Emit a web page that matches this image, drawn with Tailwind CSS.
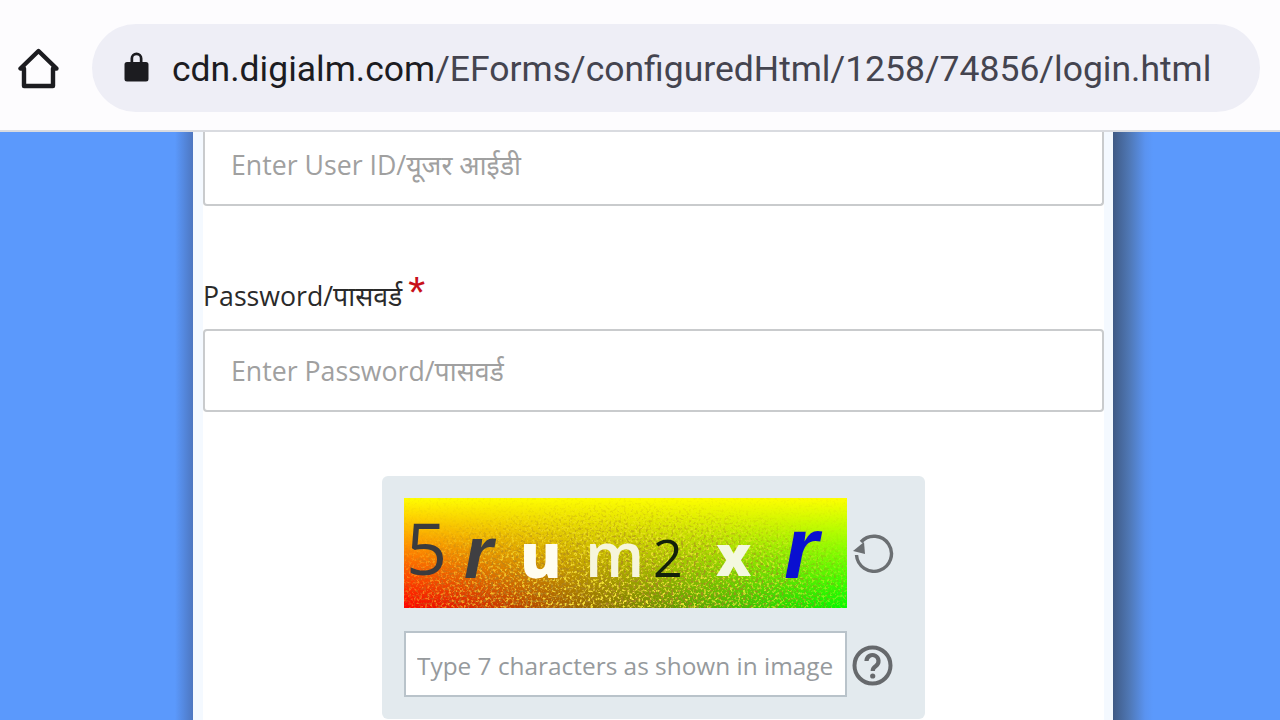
<!DOCTYPE html>
<html lang="hi">
<head>
  <meta charset="UTF-8" />
  <title>login</title>
  <script src="https://cdn.jsdelivr.net/npm/@tailwindcss/browser@4"></script>
</head>
<body class="h-screen overflow-hidden flex flex-col bg-[#5b99fc] font-['Open_Sans','Noto_Sans',sans-serif]">

  <!-- Browser bar -->
  <header class="relative z-10 h-[132px] shrink-0 flex items-start bg-[#fdfcfe] border-b-2 border-[#d9dbe0]">
    <svg class="ml-[18px] mt-[48px] w-[41px] h-[41px] text-[#1c1c20]" viewBox="0 0 41 41" fill="none" stroke="currentColor" stroke-width="4.4" stroke-linejoin="round">
      <path d="M20.5 3 L2.5 20.5 H6 V38 H35 V20.5 H38.5 Z" />
    </svg>
    <div class="ml-[33px] mt-[24px] w-[1168px] h-[88px] rounded-[44px] bg-[#eeeef6] flex items-center">
      <svg class="ml-[32px] -mt-[3px] w-[25px] h-[31px] text-[#1c1c20]" viewBox="0 0 25 31" fill="currentColor">
        <path d="M3 11 H6.5 V7.5 a6 6 0 0 1 12 0 V11 H22 a2.5 2.5 0 0 1 2.5 2.5 V28 a2.5 2.5 0 0 1 -2.5 2.5 H3 a2.5 2.5 0 0 1 -2.5 -2.5 V13.5 a2.5 2.5 0 0 1 2.5 -2.5 Z M9.2 11 H15.8 V7.5 a3.3 3.3 0 0 0 -6.6 0 Z" fill-rule="evenodd" />
      </svg>
      <div class="ml-[23px] pt-[4px] font-['Roboto',sans-serif] text-[35.5px] leading-none whitespace-nowrap text-[#44444f]"><span class="text-[#1c1c22]">cdn.digialm.com</span>/EForms/configuredHtml/1258/74856/login.html</div>
    </div>
  </header>

  <!-- Page -->
  <div class="grow flex">
    <div class="w-[175px]"></div>
    <div class="w-[18px] bg-[linear-gradient(to_right,rgba(70,110,170,0),rgba(70,100,160,0.65))]"></div>
    <main class="w-[920px] px-[10px] bg-[#f4f9ff]">
      <div class="h-full w-[901px] bg-white">
        <input type="text" placeholder="Enter User ID/यूजर आईडी"
               class="block w-full h-[74px] pl-[26px] pb-[8px] bg-white border-2 border-t-0 border-[#c9cbcd] rounded-b-[4px] text-[26.7px] placeholder:text-[#a0a0a0] outline-none" />

        <label class="block mt-[71px] h-[52px] text-[26.7px] leading-[32px] text-[#2a2a2a]">Password/पासवर्ड<span class="inline-block ml-[4px] translate-y-[2px] text-[44px] leading-[28px] text-[#c8101a] font-['Liberation_Sans',sans-serif] italic">*</span></label>
        <input type="text" placeholder="Enter Password/पासवर्ड"
               class="block w-full h-[83px] pl-[26px] pb-[1px] bg-white border-2 border-[#c9cbcd] rounded-[4px] text-[26.7px] placeholder:text-[#a0a0a0] outline-none" />

        <!-- Captcha -->
        <div class="mt-[64px] mx-auto w-[543px] h-[243px] rounded-[6px] bg-[#e3eaee] pt-[22px] pl-[22px]">
          <div class="flex items-center">
            <div class="relative w-[443px] h-[110px] overflow-hidden bg-[linear-gradient(to_bottom,#ffff00_0%,rgba(255,255,0,0)_100%),linear-gradient(to_right,#ff0000,#00ff00)]">
              <svg class="absolute inset-0 w-full h-full" viewBox="0 0 443 110">
                <defs>
                  <filter id="speck" x="0" y="0" width="100%" height="100%">
                    <feTurbulence type="fractalNoise" baseFrequency="0.38" numOctaves="2" seed="7" />
                    <feColorMatrix type="matrix" values="0 0 0 0 1  0 0 0 0 0.85  0 0 0 0 0.05  5 0 0 0 -2.5" />
                    <feGaussianBlur stdDeviation="0.5" />
                  </filter>
                  <filter id="dark" x="0" y="0" width="100%" height="100%">
                    <feTurbulence type="fractalNoise" baseFrequency="0.4" numOctaves="2" seed="21" />
                    <feColorMatrix type="matrix" values="0 0 0 0 0.4  0 0 0 0 0.22  0 0 0 0 0.02  0 5 0 0 -2.6" />
                    <feGaussianBlur stdDeviation="0.5" />
                  </filter>
                  <radialGradient id="fade" cx="0.5" cy="0.95" r="0.62" gradientTransform="translate(0.5 0.95) scale(1 1.5) translate(-0.5 -0.95)">
                    <stop offset="0" stop-color="#fff" />
                    <stop offset="0.6" stop-color="#999" />
                    <stop offset="1" stop-color="#111" />
                  </radialGradient>
                  <mask id="fadeMask"><rect width="443" height="110" fill="url(#fade)" /></mask>
                </defs>
                <g mask="url(#fadeMask)">
                  <rect width="443" height="110" filter="url(#speck)" />
                  <rect width="443" height="110" filter="url(#dark)" />
                </g>
              </svg>
              <div class="absolute inset-0 blur-[0.7px]">
                <span class="absolute left-[2px] top-[4px] font-['Open_Sans',sans-serif] font-medium text-[72px] leading-[90px] text-[#3b3b3e]">5</span>
                <span class="absolute left-[60px] top-[15px] font-['Liberation_Sans',sans-serif] font-bold italic text-[74px] leading-[80px] text-[#3f3f42]">r</span>
                <span class="absolute left-[116px] top-[16px] font-['Open_Sans',sans-serif] font-extrabold text-[62px] leading-[80px] text-[#fffdf0]">u</span>
                <span class="absolute left-[181px] top-[17px] font-['Open_Sans',sans-serif] font-semibold text-[62px] leading-[76px] text-[#f6f5dc]">m</span>
                <span class="absolute left-[249px] top-[28px] font-['Open_Sans',sans-serif] font-medium text-[52px] leading-[62px] text-[#14200c]">2</span>
                <span class="absolute left-[312px] top-[18px] font-['Open_Sans',sans-serif] font-extrabold text-[56px] leading-[76px] text-[#f4f8e0]">x</span>
                <span class="absolute left-[380px] top-[6px] font-['Liberation_Sans',sans-serif] font-bold italic text-[88px] leading-[88px] text-[#0a10d0]">r</span>
              </div>
            </div>
            <svg class="ml-[5px] w-[43px] h-[40px] text-[#6b6f72]" viewBox="0 0 43 40" fill="none" stroke="currentColor" stroke-width="3.4">
              <path d="M9 9 A17.5 17.5 0 1 1 4.5 22" />
              <path d="M1 18 L12 9 L13 21 Z" fill="currentColor" stroke="none" />
            </svg>
          </div>
          <div class="flex items-center mt-[23px]">
            <input type="text" placeholder="Type 7 characters as shown in image"
                   class="block w-[443px] h-[66px] pl-[11px] pr-[2px] pt-[3px] bg-white border-2 border-[#b9c3ca] text-[24.4px] placeholder:text-[#969a9d] outline-none" />
            <svg class="ml-[5px] mt-[3px] w-[41px] h-[41px] text-[#66696c]" viewBox="0 0 41 41" fill="none" stroke="currentColor" stroke-width="4">
              <circle cx="20.5" cy="20.5" r="18" />
              <path d="M14.5 16 a6 6 0 1 1 9.4 5 c-2.2 1.5 -3.2 2.5 -3.2 5" stroke-width="4.2" />
              <circle cx="20.7" cy="31" r="2.6" fill="currentColor" stroke="none" />
            </svg>
          </div>
        </div>
      </div>
    </main>
    <div class="w-[40px] bg-[linear-gradient(to_right,#3f5a85_0%,#4f77b4_40%,#5a93f0_80%,#5b99fc_100%)]"></div>
  </div>
</body>
</html>
